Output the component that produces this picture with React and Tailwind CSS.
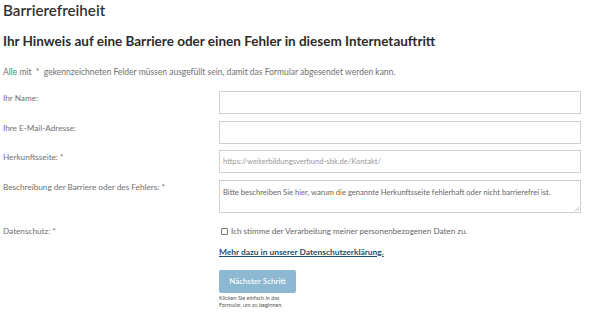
const fields = [
  { label: "Ihr Name:", type: "input" },
  { label: "Ihre E-Mail-Adresse:", type: "input" },
  {
    label: "Herkunftsseite: *",
    type: "input",
    value: "https://weiterbildungsverbund-sbk.de/Kontakt/",
  },
  {
    label: "Beschreibung der Barriere oder des Fehlers: *",
    type: "textarea",
    value:
      "Bitte beschreiben Sie hier, warum die genannte Herkunftsseite fehlerhaft oder nicht barrierefrei ist.",
  },
];

function App() {
  return (
    <div className="w-[600px] h-[332px] overflow-hidden bg-white text-[#333] font-['Lato','Noto_Sans',sans-serif] leading-none">
      <div className="pl-[3px] pr-[19px]">
        {/* Page title */}
        <h1 className="text-[15.2px] font-semibold leading-[18px] pt-[1px] text-[#333]">
          Barrierefreiheit
        </h1>

        <h2 className="text-[13.5px] font-bold leading-[16px] mt-[14px] text-[#2b2b2b]">
          Ihr Hinweis auf eine Barriere oder einen Fehler in diesem Internetauftritt
        </h2>

        <p className="text-[8.5px] leading-[10px] mt-[18px] text-[#707070]">
          Alle mit &nbsp;*&nbsp; gekennzeichneten Felder müssen ausgefüllt sein, damit das Formular abgesendet werden kann.
        </p>

        {/* Form */}
        <div className="mt-[14px] flex flex-col gap-[6.5px]">
          {fields.map((f, i) => (
            <div key={i} className="flex">
              <label className="w-[216px] shrink-0 text-[8.2px] leading-[10px] pt-[2px] text-[#707070]">
                {f.label}
              </label>
              {f.type === "input" ? (
                <div className="flex-1 h-[23px] border border-[#cfcfcf] px-[3px] flex items-center text-[7.6px] text-[#999]">
                  {f.value}
                </div>
              ) : (
                <div className="relative flex-1 h-[33px] border border-[#cfcfcf] px-[3px] pt-[6px] text-[7.6px] leading-[10px] text-[#666]">
                  {f.value}
                  <svg className="absolute right-[1px] bottom-[1px]" width="5" height="5" viewBox="0 0 5 5">
                    <path d="M5 1 L1 5 M5 3 L3 5" stroke="#aaa" strokeWidth="0.7" />
                  </svg>
                </div>
              )}
            </div>
          ))}
        </div>

        {/* Datenschutz */}
        <div className="flex mt-[14px]">
          <label className="w-[216px] shrink-0 text-[8.2px] leading-[9px] text-[#707070]">
            Datenschutz: *
          </label>
          <div className="flex items-center gap-[3px] pl-[2px] text-[8.1px] leading-[9px] text-[#666]">
            <span className="w-[7px] h-[7px] border border-[#777] rounded-[1px]"></span>
            Ich stimme der Verarbeitung meiner personenbezogenen Daten zu.
          </div>
        </div>

        <div className="ml-[216px] mt-[11px]">
          <a className="block w-fit text-[8.4px] font-bold leading-[10px] text-[#1d4e6b] underline underline-offset-1">
            Mehr dazu in unserer Datenschutzerklärung.
          </a>

          <button className="block mt-[13px] w-[77px] h-[23px] rounded-[2px] bg-[#8cb8d2] text-white text-[8px] font-medium">
            Nächster Schritt
          </button>

          <p className="mt-[2px] text-[5.5px] leading-[7px] text-[#555]">
            Klicken Sie einfach in das
            <br />
            Formular, um zu beginnen.
          </p>
        </div>
      </div>
    </div>
  );
}

export default App;
